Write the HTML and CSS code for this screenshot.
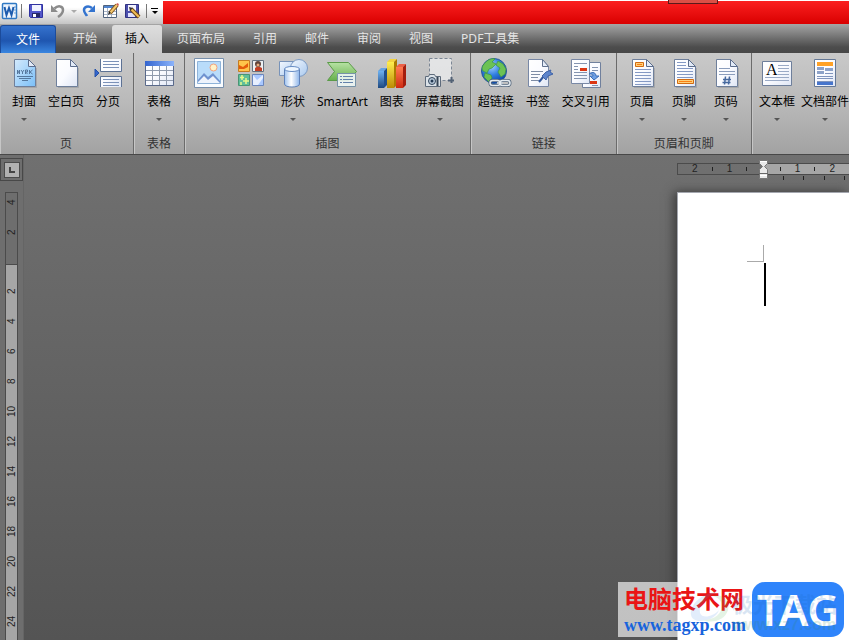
FILE: index.html
```html
<!DOCTYPE html>
<html lang="zh-CN">
<head>
<meta charset="utf-8">
<title>文档 - Word</title>
<link rel="stylesheet" href="styles.css">
</head>
<body>
<svg class="defs" width="0" height="0" aria-hidden="true">
  <defs>
    <linearGradient id="paper" x1="0" y1="0" x2="1" y2="1"><stop offset="0" stop-color="#ffffff"/><stop offset=".5" stop-color="#fafbff"/><stop offset="1" stop-color="#dfe6f5"/></linearGradient>
    <linearGradient id="bluepaper" x1="0" y1="0" x2="1" y2="1"><stop offset="0" stop-color="#d2e9fc"/><stop offset="1" stop-color="#7cc0f8"/></linearGradient>
    <linearGradient id="head" x1="0" y1="0" x2="1" y2="0"><stop offset="0" stop-color="#3465cf"/><stop offset="1" stop-color="#8bb3fb"/></linearGradient>
    <linearGradient id="shape" x1="0" y1="0" x2="1" y2="1"><stop offset="0" stop-color="#f4f9ff"/><stop offset="1" stop-color="#a8c8ee"/></linearGradient>
    <linearGradient id="cyl" x1="0" y1="0" x2="1" y2="0"><stop offset="0" stop-color="#9fc2ee"/><stop offset=".45" stop-color="#ffffff"/><stop offset="1" stop-color="#8db5ea"/></linearGradient>
    <linearGradient id="green" x1="0" y1="0" x2="0" y2="1"><stop offset="0" stop-color="#b7e2a4"/><stop offset="1" stop-color="#67b04c"/></linearGradient>
    <radialGradient id="globe" cx=".4" cy=".3" r=".75"><stop offset="0" stop-color="#a5d4ff"/><stop offset=".5" stop-color="#2f7de0"/><stop offset="1" stop-color="#0b3c9c"/></radialGradient>
    <linearGradient id="bb" x1="0" y1="0" x2="0" y2="1"><stop offset="0" stop-color="#6db0f0"/><stop offset="1" stop-color="#1e487f"/></linearGradient>
    <linearGradient id="by" x1="0" y1="0" x2="0" y2="1"><stop offset="0" stop-color="#ffee4e"/><stop offset="1" stop-color="#bb8a06"/></linearGradient>
    <linearGradient id="br" x1="0" y1="0" x2="0" y2="1"><stop offset="0" stop-color="#ff7a50"/><stop offset="1" stop-color="#cf2b12"/></linearGradient>
    <symbol id="page" viewBox="0 0 32 32"><path d="M6.500 2.500H20.500L27.500 9.500V29.500H6.500Z" fill="url(#paper)" stroke="#6e7f9b"/><path d="M20.500 2.500V9.500H27.500Z" fill="#e3ebf8" stroke="#5c6d8c"/><path d="M28.500 11V30.500H8" fill="none" stroke="#8e9094" stroke-opacity=".5"/></symbol>
  </defs>
</svg>

<header class="titlebar">
  <div class="quick">
    <button class="q" aria-label="Word"><svg width="18" height="18" viewBox="0 0 18 18"><rect x="1.500" y="1.500" width="14" height="15" rx="1" fill="#eef5fd" stroke="#2f79c4" stroke-width="1.500"/><path d="M13 5h2M13 8h2M13 11h2" stroke="#6b9fd6"/><path d="M3.500 5L5.500 13L8 6L10.500 13L12.500 5" fill="none" stroke="#1d5cae" stroke-width="2"/></svg></button>
    <i class="sep"></i>
    <button class="q" aria-label="保存"><svg width="16" height="16" viewBox="0 0 16 16"><path d="M1.500 1.500H14.500V14.500H2.500L1.500 13.500Z" fill="#5457c9" stroke="#3032a0"/><path d="M4 2h9v6H4z" fill="#f1f3ff"/><path d="M4 10h8v4H4z" fill="#272968"/><path d="M5 11h3v3H5z" fill="#fff"/></svg></button>
    <button class="q" aria-label="撤消"><svg width="16" height="16" viewBox="0 0 16 16"><path d="M4.500 5.500C8 2 13 3 13 7C13 10 11 12 8 14" fill="none" stroke="#8b8b8b" stroke-width="2.500"/><path d="M1 2V9H8Z" fill="#8b8b8b"/></svg></button>
    <button class="q tiny" aria-label="撤消列表"><i class="down pale"></i></button>
    <button class="q" aria-label="恢复"><svg width="16" height="16" viewBox="0 0 16 16"><path d="M11 5C7 2 3 4 3 7C3 10 5 11 6 13" fill="none" stroke="#3474cf" stroke-width="2.500"/><path d="M14 2V9H7Z" fill="#3474cf"/></svg></button>
    <button class="q" aria-label="绘制表格"><svg width="18" height="18" viewBox="0 0 18 18"><path d="M1.500 3.500h13v12h-13z" fill="#fff" stroke="#50627c"/><path d="M2 4h12v2H2z" fill="#4f84cf"/><path d="M2 9.500h12M2 12.500h12M5.500 6v9M9.500 6v9" stroke="#a8b4c6"/><path d="M8 11L15 3" stroke="#81551d" stroke-width="4"/><path d="M8 11L15 3" stroke="#f3c76d" stroke-width="2"/><path d="M6 13l1-4 2 2z" fill="#222"/><path d="M14 2l2-1 1 2-1 1z" fill="#d05b50"/></svg></button>
    <button class="q" aria-label="另存为"><svg width="18" height="18" viewBox="0 0 18 18"><path d="M1.500 2.500h13v13h-13z" fill="#4c50ae" stroke="#303280"/><path d="M4 3h8v6H4z" fill="#f3f3ff"/><path d="M4 11h7v4H4z" fill="#dfe1ff"/><path d="M7 7l8 8" stroke="#6e4b1c" stroke-width="4"/><path d="M7 7l8 8" stroke="#f2bd56" stroke-width="2"/><path d="M5 5l4 1-3 3z" fill="#333"/></svg></button>
    <i class="sep"></i>
    <button class="q tiny" aria-label="自定义"><i class="bar"></i><i class="down black"></i></button>
  </div>
  <div class="caption"><i class="notch"></i></div>
</header>

<nav class="tabs">
  <button class="file">文件</button>
  <button>开始</button><button class="active">插入</button><button>页面布局</button><button>引用</button><button>邮件</button><button>审阅</button><button>视图</button><button>PDF工具集</button>
</nav>

<section class="ribbon">
  <div class="group">
    <div class="tools">
      <button><svg viewBox="0 0 32 32"><use href="#page"/><path d="M7 3H20V10H27V29H7Z" fill="url(#bluepaper)"/><path d="M9.500 17v-4l2 4v-4M13 13l1.500 2v2M16 13l-1.500 2M17.500 17v-4h2v2h-2l2 2M21.500 13v4M24.500 13l-2.500 2 2.500 2" fill="none" stroke="#55779d"/><path d="M9 19.500h16M11 21.500h12M14 23.500h6" stroke="#55799f"/></svg><span>封面</span><i class="down"></i></button>
      <button><svg viewBox="0 0 32 32"><use href="#page"/></svg><span>空白页</span></button>
      <button><svg viewBox="0 0 32 32"><path d="M8.500 2v12.500h21V2M8.500 30V19.500h21V30" fill="url(#paper)" stroke="#5d7294"/><path d="M11 4.500h16M11 7.500h16M11 10.500h16M11 22.500h16M11 25.500h16M11 28.500h16" stroke="#7b91b8"/><path d="M3 12v8l4-4z" fill="#3567cc" stroke="#2450a8"/></svg><span>分页</span></button>
    </div>
    <h2>页</h2>
  </div>
  <div class="group">
    <div class="tools">
      <button><svg viewBox="0 0 32 32"><path d="M2.500 4.500h28v24h-28z" fill="url(#paper)" stroke="#59698a"/><path d="M2 4h29v5H2z" fill="url(#head)"/><path d="M3 13.500h27M3 18.500h27M3 23.500h27M9.500 9v19M16.500 9v19M23.500 9v19" stroke="#909bad"/></svg><span>表格</span><i class="down"></i></button>
    </div>
    <h2>表格</h2>
  </div>
  <div class="group pictures">
    <div class="tools">
      <button><svg viewBox="0 0 32 32"><path d="M1.500 1.500h29v29h-29z" fill="#f9fcff" stroke="#7890ac"/><path d="M4.500 4.500h23v22h-23z" fill="#b9dcfa" stroke="#8eb3d9"/><circle cx="20.500" cy="10.500" r="3.500" fill="#fff2c7" stroke="#f1a37f"/><path d="M5 23L11 16L15 20L20 16L27 24V26H5z" fill="#6f92cf"/><path d="M5 25L11 19L15 23L20 19L27 26H5z" fill="#edf3fc"/></svg><span>图片</span></button>
      <button><svg viewBox="0 0 32 32"><path d="M3.500 3.500h11v11h-11z" fill="#ffc44b" stroke="#c77b21"/><path d="M4 8l4 2 5-4v4l-4 2H4z" fill="#e45a0b"/><path d="M17.500 3.500h11v11h-11z" fill="#edf1f3" stroke="#65717f"/><path d="M20 14v-3l3-2 4 2v3z" fill="#c33f25"/><circle cx="23" cy="7" r="3" fill="#604239"/><circle cx="23" cy="8" r="1.500" fill="#e8ad80"/><path d="M3.500 17.500h11v11h-11z" fill="#60bf9a" stroke="#499574"/><path d="M7 18v5M5 20.500h4M11 21v6M8 24h6M6 25v3" stroke="#e9f98c" stroke-width="1.500"/><path d="M17.500 17.500h11v11h-11z" fill="#a9c8ff" stroke="#6a86bd"/><path d="M18 18l4 5 6-5v3l-5 7h-5z" fill="#e7efff"/></svg><span>剪贴画</span></button>
      <button><svg viewBox="0 0 32 32"><path d="M2.500 4.500h16v14h-16z" fill="url(#shape)" stroke="#7893b9"/><circle cx="22" cy="11" r="8.500" fill="url(#shape)" stroke="#7c9bc5"/><path d="M7.500 12v15c0 4 15 4 15 0V12" fill="url(#cyl)" stroke="#5f82b9"/><ellipse cx="15" cy="12" rx="7.500" ry="2.500" fill="#edf6ff" stroke="#668cc4"/></svg><span>形状</span><i class="down"></i></button>
      <button><svg viewBox="0 0 32 32"><path d="M1.500 5.500h21l8 9-8 9h-21l7-9z" fill="url(#green)" stroke="#5a9b48"/><path d="M11.500 16.500h18v13h-18z" fill="#edf6f4" fill-opacity=".9" stroke="#7693a8"/><path d="M14 19.500h2M17 19.500h10M14 22.500h2M17 22.500h10M14 25.500h2M17 25.500h10" stroke="#6382ab"/></svg><span>SmartArt</span></button>
      <button><svg viewBox="0 0 32 32"><path d="M2 14h6v17H2z" fill="url(#bb)"/><path d="M2 14l3-3h6l-3 3z" fill="#65a3e2"/><path d="M8 14l3-3v17l-3 3z" fill="#204f8d"/><path d="M11 5h7v26h-7z" fill="url(#by)"/><path d="M11 5l3-3h7l-3 3z" fill="#f4d33d"/><path d="M18 5l3-3v26l-3 3z" fill="#ab7b00"/><path d="M20 10h7v21h-7z" fill="url(#br)"/><path d="M20 10l3-3h7l-3 3z" fill="#ed6046"/><path d="M27 10l3-3v21l-3 3z" fill="#a51e0e"/></svg><span>图表</span></button>
      <button><svg viewBox="0 0 32 32"><path d="M5.500 1.500h22v22h-22z" fill="#eff1f2" fill-opacity=".7" stroke="#7c8795" stroke-dasharray="3 2"/><path d="M24 23.500h6M27.500 20v6" stroke="#526174" stroke-width="2"/><path d="M1.500 19.500h3l1-2h5l1 2h5v10h-15z" fill="#dbe2e8" stroke="#5e6b7b"/><circle cx="8" cy="24" r="3.500" fill="#b9c9d9" stroke="#33475c"/><circle cx="8" cy="24" r="1.500" fill="#223851"/><path d="M13.500 20v9" stroke="#344454" stroke-width="2"/></svg><span>屏幕截图</span><i class="down"></i></button>
    </div>
    <h2>插图</h2>
  </div>
  <div class="group links">
    <div class="tools">
      <button><svg viewBox="0 0 32 32"><circle cx="14" cy="14" r="12.500" fill="url(#globe)" stroke="#275b96"/><path d="M5 6C8 2 13 1 15 2L12 5l4 2-4 4-3 1-2 4-4-2C1 11 3 8 5 6zM18 4l5 3 3 5-1 5-4 3-3-5 2-4-4-3zM5 16l6 2 1 3-3 4-5-5z" fill="#6cc254" stroke="#3e9640" stroke-width=".7"/><rect x="10" y="23.500" width="10" height="5" rx="2.500" fill="none" stroke="#52657a" stroke-width="3"/><rect x="20" y="23.500" width="10" height="5" rx="2.500" fill="none" stroke="#52657a" stroke-width="3"/><path d="M17 26h6" stroke="#52657a" stroke-width="3"/><rect x="10" y="23.500" width="10" height="5" rx="2.500" fill="none" stroke="#e4ebf1" stroke-width="1.500"/><rect x="20" y="23.500" width="10" height="5" rx="2.500" fill="none" stroke="#e4ebf1" stroke-width="1.500"/><path d="M17 26h6" stroke="#e4ebf1" stroke-width="1.500"/></svg><span>超链接</span></button>
      <button><svg viewBox="0 0 32 32"><path d="M6.500 2.500h14l6 7v20h-20z" fill="url(#paper)" stroke="#7888a6"/><path d="M20.500 2.500v7h6z" fill="#e5ecf7" stroke="#60718d"/><path d="M9 14.500h12M9 17.500h9M9 20.500h7M9 23.500h9" stroke="#7d8ca6"/><path d="M17 25l5-6" stroke="#31579b" stroke-width="2"/><path d="M20 19l4 4 2-4 5-2-3-2 1-2-5 2z" fill="#5c84cc" stroke="#3f63a8"/></svg><span>书签</span></button>
      <button><svg viewBox="0 0 32 32"><path d="M12.500 5.500h18v25h-18z" fill="url(#paper)" stroke="#70809d"/><path d="M1.500 2.500h18v24h-18z" fill="url(#paper)" stroke="#7988a5"/><path d="M4 6.500h13M4 9.500h4M4 12.500h4M4 15.500h13M4 18.500h13M4 21.500h13M22 10.500h6M22 13.500h6M22 28.500h6" stroke="#8494b0"/><path d="M10 11h7v3h-7zM20 24h7v3h-7z" fill="#db3512"/><path d="M19 17c4-3 7-1 7 2h3l-5 4-4-4h3c0-2-1-2-4-2z" fill="#6d9fe5" stroke="#3d6eb6"/></svg><span>交叉引用</span></button>
    </div>
    <h2>链接</h2>
  </div>
  <div class="group">
    <div class="tools">
      <button><svg viewBox="0 0 32 32"><use href="#page"/><path d="M9.500 5.500h8v4h-8z" fill="#ffd17a" stroke="#d16b12"/><path d="M11 7.500h5" stroke="#fb7e16"/><path d="M9 12.500h16M9 15.500h16M9 18.500h16M9 21.500h16M9 24.500h16M9 27.500h16" stroke="#8499c4"/></svg><span>页眉</span><i class="down"></i></button>
      <button><svg viewBox="0 0 32 32"><use href="#page"/><path d="M9 5.500h9M9 8.500h9M9 11.500h16M9 14.500h16M9 17.500h16M9 20.500h16" stroke="#8499c4"/><path d="M9.500 22.500h16v4h-16z" fill="#ffd17a" stroke="#d16b12"/><path d="M11 24.500h13" stroke="#fb7e16"/></svg><span>页脚</span><i class="down"></i></button>
      <button><svg viewBox="0 0 32 32"><use href="#page"/><path d="M9 11.500h11M9 14.500h16M9 17.500h16" stroke="#8b9dbc"/><path d="M15.500 19.500l-1 8M19.500 19.500l-1 8M13 22.500h8M12.500 25.500h8" stroke="#46699f" stroke-width="1.500"/></svg><span>页码</span><i class="down"></i></button>
    </div>
    <h2>页眉和页脚</h2>
  </div>
  <div class="group last">
    <div class="tools">
      <button><svg viewBox="0 0 32 32"><path d="M1.500 4.500h29v24h-29z" fill="url(#paper)" stroke="#6e7f9b"/><text x="5" y="18" class="letter">A</text><path d="M17 8.500h11M17 11.500h11M17 14.500h11M17 17.500h11M4 20.500h24M4 23.500h24" stroke="#9aaac6"/></svg><span>文本框</span><i class="down"></i></button>
      <button><svg viewBox="0 0 32 32"><path d="M5.500 2.500h21v27h-21z" fill="url(#paper)" stroke="#647896"/><path d="M8 5h16v4H8z" fill="#ffa126"/><path d="M8 10h7v3H8zM16 11h8v3h-8zM8 14h7v3H8z" fill="#8da2c8"/><path d="M16 16.500h8M8 19.500h16M8 21.500h16M8 24.500h16" stroke="#8195bd"/><path d="M8 25h16v3H8z" fill="#4775cc"/></svg><span>文档部件</span><i class="down"></i></button>
    </div>
  </div>
</section>

<main class="workspace">
  <aside class="side">
    <button class="tabstop" aria-label="制表符"><i></i></button>
    <div class="vruler">
      <div class="vmargin"><span>4</span><span>2</span></div>
      <div class="vbody"><span>2</span><span>4</span><span>6</span><span>8</span><span>10</span><span>12</span><span>14</span><span>16</span><span>18</span><span>20</span><span>22</span><span>24</span></div>
    </div>
  </aside>
  <div class="sheet">
    <div class="hruler">
      <div class="hmargin"><span>2</span><i></i><span>1</span><i></i></div>
      <div class="hbody"><i></i><span>1</span><i></i><span>2</span></div>
      <svg class="indent" width="11" height="20" viewBox="0 0 11 20"><path d="M1.500.5h8v3l-3 3 3 3v9h-8v-9l3-3-3-3z" fill="#e9e9e9" stroke="#777"/><path d="M1 13.500h9" stroke="#666"/><path d="M2 1h7v1H2zM2 15h7v1H2z" fill="#fff"/></svg>
    </div>
    <div class="stops"><i></i><i></i><i></i><i></i></div>
    <article class="paper"><div class="corner"></div><div class="caret"></div></article>
  </div>
  <div class="brand">
    <div class="site"><strong>电脑技术网</strong><a href="#">www.tagxp.com</a></div>
    <b class="tag">TAG</b>
    <div class="ghost">
      <svg width="44" height="34" viewBox="0 0 44 34"><path d="M28 1C12 3 2 14 3 24C5 34 27 31 31 19C25 26 14 28 12 22C10 15 18 7 28 1Z" fill="#4f94e8"/><path d="M24 5C32 2 43 8 40 19C37 29 25 33 15 29C27 29 34 22 34 15C34 10 30 6 24 5Z" fill="#60ba61"/></svg>
      <div><em>极光下载站</em><small>www.xz7.com</small></div>
    </div>
  </div>
</main>
</body>
</html>
```
FILE: styles.css
```css
* { box-sizing: border-box; }

body {
  margin: 0;
  height: 100vh;
  display: flex;
  flex-direction: column;
  overflow: hidden;
  font: 12px/16px "Noto Sans", "Noto Sans CJK SC", sans-serif;
  color: #000;
  background: #6c6c6c;
}

button {
  margin: 0;
  padding: 0;
  border: 0;
  background: none;
  font: inherit;
  color: inherit;
  white-space: nowrap;
}

svg { display: block; flex: none; }
.defs { position: absolute; }

.down {
  border: 3px solid transparent;
  border-top-color: #555;
  border-bottom: 0;
}

/* Title bar */
.titlebar { display: flex; flex: none; height: 24px; background: #fff; }

.quick {
  display: flex;
  align-items: center;
  width: 163px;
  padding-bottom: 2px;
  background: linear-gradient(#fff 30%, #c4c4c4);
}

.q { display: flex; justify-content: center; width: 22px; }
.q:first-child { width: 19px; }
.q.tiny { flex-direction: column; align-items: center; width: 9px; }
.sep { width: 1px; height: 14px; margin: 0 3px 0 2px; background: #777; }
.bar { width: 7px; height: 1px; margin-bottom: 2px; background: #000; }
.pale { border-top-color: #aaa; }
.black { border-top-color: #000; }

.caption {
  flex: 1;
  position: relative;
  margin-top: 1px;
  background: linear-gradient(#fb2020, #d90000);
}

.notch {
  position: absolute;
  top: -1px;
  right: 131px;
  width: 50px;
  height: 4px;
  border: 1px solid #5a1a1a;
  border-top: 0;
  background: #db5046;
}

/* Tabs */
.tabs {
  display: flex;
  flex: none;
  height: 29px;
  padding-top: 1px;
  background: linear-gradient(#a6a6a6, #4c4c4c 80%, #484848);
  color: #e4e4e4;
}
.tabs button { padding: 0 14px; }
.tabs .file {
  width: 56px;
  margin-right: 3px;
  border: 1px solid #1c4b9a;
  border-bottom: 0;
  border-radius: 3px 3px 0 0;
  background: linear-gradient(#3572cd, #1f56b0 55%, #3a86e0);
  color: #fff;
}
.tabs .active {
  margin: 0 1px;
  padding: 0 13px;
  border-radius: 3px 3px 0 0;
  background: linear-gradient(#dedede, #c9c9c9);
  color: #000;
}

/* Ribbon */
.ribbon {
  display: flex;
  flex: none;
  height: 102px;
  overflow: hidden;
  border-bottom: 1px solid #484848;
  background: linear-gradient(#c9c9c9, #b9b9b9 50%, #a2a2a2);
}
.group {
  display: flex;
  flex: none;
  flex-direction: column;
  justify-content: space-between;
  padding: 4px 4px 2px;
  border-right: 1px solid #6b6b6b;
  box-shadow: inset 1px 0 #c6c6c6;
}
.group:first-child, .group.pictures { padding-left: 3px; }
.group.pictures, .group.links { padding-right: 3px; }
.group.last { flex: 1 0 auto; border: 0; }
.group h2 { margin: 0; font: inherit; text-align: center; color: #333; }
.tools { display: flex; }
.tools button {
  display: flex;
  flex-direction: column;
  align-items: center;
  min-width: 42px;
  padding: 0 3px;
}
.tools svg { width: 32px; height: 32px; margin-bottom: 5px; }
.tools .down { margin-top: 8px; }
.letter { font: 16px "Liberation Serif", serif; }

/* Workspace */
.workspace {
  flex: 1;
  min-height: 0;
  display: grid;
  grid-template-columns: 24px 172px;
  grid-template-rows: 100%;
  justify-content: space-between;
  position: relative;
  overflow: hidden;
  background: linear-gradient(#707070, #545454);
}

.side {
  display: flex;
  flex-direction: column;
  min-height: 0;
  padding-top: 3px;
  border-right: 1px solid #656565;
  background: #6e6e6e;
}
.tabstop {
  flex: none;
  display: grid;
  place-items: center;
  height: 23px;
  margin-bottom: 11px;
  border: 1px solid #484848;
}
.tabstop::before {
  content: "";
  grid-area: 1 / 1;
  width: 14px;
  height: 14px;
  border: 1px solid #4b4b4b;
  background: #b1b1b1;
}
.tabstop i {
  grid-area: 1 / 1;
  width: 6px;
  height: 6px;
  border: solid #444;
  border-width: 0 0 2px 2px;
}
.vruler {
  flex: 1 0 auto;
  display: flex;
  flex-direction: column;
  width: 13px;
  margin-left: 5px;
  border: 1px solid #4b4b4b;
  border-bottom: 0;
  font: 10px/11px "Liberation Sans", sans-serif;
  color: #222;
}
.vruler span {
  display: block;
  width: 11px;
  height: 30px;
  writing-mode: vertical-rl;
  transform: rotate(180deg);
  text-align: center;
}
.vmargin { height: 72px; overflow: hidden; border-bottom: 1px solid #4b4b4b; }
.vmargin span:first-child { height: 18px; }
.vmargin span:last-child { height: 42px; }
.vbody { flex: 1; padding-top: 11px; background: #a6a6a6; }

.sheet { display: flex; flex-direction: column; }
.hruler {
  position: relative;
  flex: none;
  display: flex;
  height: 12px;
  margin-top: 8px;
  border: 1px solid #4b4b4b;
  border-right: 0;
  font: 10px/10px "Liberation Sans", sans-serif;
  color: #222;
}
.hmargin, .hbody {
  flex: 1;
  display: grid;
  grid-template-columns: repeat(4, 1fr);
  place-items: center;
  padding: 0 8px;
}
.hbody { background: #a6a6a6; }
.hruler i, .stops i { width: 1px; height: 4px; background: #222; }
.indent { position: absolute; left: 80px; top: -4px; }
.stops {
  display: flex;
  justify-content: space-between;
  height: 17px;
  padding: 1px 4px 0 106px;
}
.paper {
  flex: 1;
  padding: 52px 0 0 69px;
  border: solid #a4a7af;
  border-width: 1px 0 0 1px;
  background: #fff;
  box-shadow: -3px 0 10px #3a3a3a;
}
.corner { width: 17px; height: 17px; border: solid #aaa; border-width: 0 1px 1px 0; }
.caret { width: 2px; height: 43px; margin: 1px 0 0 17px; background: #000; }

/* Site badge over the lower right corner */
.brand {
  position: absolute;
  right: 0;
  bottom: 3px;
  display: flex;
  width: 231px;
  height: 55px;
  padding-left: 6px;
  background: rgba(255, 255, 255, .64);
}
.site { width: 128px; white-space: nowrap; }
.site strong {
  display: block;
  font: bold 24px/32px "Noto Sans CJK SC", sans-serif;
  color: #ea1515;
}
.site a {
  display: block;
  font: bold 18px/22px "Liberation Serif", serif;
  color: #1763dc;
  text-decoration: none;
}
.tag {
  width: 92px;
  border-radius: 13px;
  background: #2e84fb;
  font: 600 44px/54px "Noto Sans", sans-serif;
  color: #fff;
  text-align: center;
}
.ghost {
  position: absolute;
  left: 70px;
  top: 9px;
  display: flex;
  opacity: .16;
  color: #1766ba;
}
.ghost em { display: block; font: bold 21px/24px "Noto Sans CJK SC", sans-serif; }
.ghost small { display: block; font: bold 16px/20px "Liberation Sans", sans-serif; color: #2f8a50; }
```
